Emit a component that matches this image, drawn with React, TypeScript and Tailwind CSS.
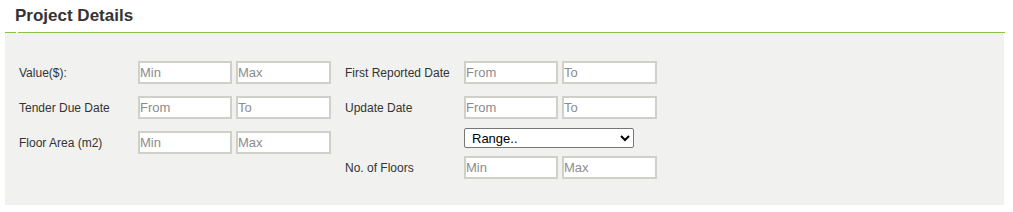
import React from "react";

const inputCls =
  "h-[23px] border-2 border-[#d0d0ca] bg-white px-0 text-[13px] text-[#333] placeholder:text-[#8c8c8c] outline-none";

function Pair({ a, b }: { a: string; b: string }) {
  return (
    <div className="flex gap-[4px]">
      <input placeholder={a} className={`${inputCls} w-[94px]`} />
      <input placeholder={b} className={`${inputCls} w-[95px]`} />
    </div>
  );
}

function Row({
  label,
  a,
  b,
  className = "",
}: {
  label: string;
  a: string;
  b: string;
  className?: string;
}) {
  return (
    <div className={`flex h-[23px] items-center ${className}`}>
      <label className="w-[119px] text-[12px] text-[#333]">{label}</label>
      <Pair a={a} b={b} />
    </div>
  );
}

export default function App() {
  return (
    <div className="h-[212px] w-[1013px] bg-white px-[5px] font-['Liberation_Sans',Arial,sans-serif]">
      <h2 className="h-[32px] pl-[10px] pt-[5px] text-[17px] font-bold leading-[21px] text-[#333]">
        Project Details
      </h2>
      <div className="flex h-px w-[1000px]">
        <div className="w-[11px] bg-[#84c347]" />
        <div className="w-[2px]" />
        <div className="flex-1 bg-[#84c347]" />
      </div>
      <div className="flex h-[172px] w-[999px] gap-[14px] bg-[#f1f1ef] pl-[14px] pt-[28px]">
        <div className="flex flex-col gap-[12px]">
          <Row label="Value($):" a="Min" b="Max" />
          <Row label="Tender Due Date" a="From" b="To" />
          <Row label="Floor Area (m2)" a="Min" b="Max" />
        </div>
        <div className="flex flex-col">
          <Row label="First Reported Date" a="From" b="To" />
          <Row label="Update Date" a="From" b="To" className="mt-[12px]" />
          <div className="mt-[9px] flex h-[20px]">
            <div className="w-[119px]" />
            <select
              defaultValue=""
              className="h-[20px] w-[170px] rounded-[2px] border border-[#767676] bg-white pl-[3px] text-[13px] text-black"
            >
              <option value="">Range..</option>
              <option value="1">1 - 5</option>
              <option value="2">6 - 10</option>
              <option value="3">11+</option>
            </select>
          </div>
          <Row label="No. of Floors" a="Min" b="Max" className="mt-[8px]" />
        </div>
      </div>
    </div>
  );
}
